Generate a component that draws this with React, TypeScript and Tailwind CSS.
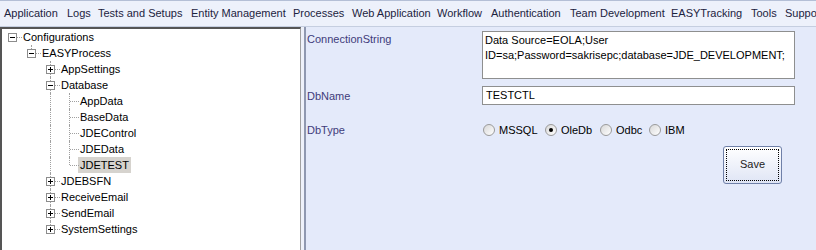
import React from "react";

type Node = { label: string; children?: Node[]; open?: boolean; selected?: boolean };

const tree: Node = {
  label: "Configurations",
  open: true,
  children: [
    {
      label: "EASYProcess",
      open: true,
      children: [
        { label: "AppSettings", children: [{ label: "x" }] },
        {
          label: "Database",
          open: true,
          children: [
            { label: "AppData" },
            { label: "BaseData" },
            { label: "JDEControl" },
            { label: "JDEData" },
            { label: "JDETEST", selected: true },
          ],
        },
        { label: "JDEBSFN", children: [{ label: "x" }] },
        { label: "ReceiveEmail", children: [{ label: "x" }] },
        { label: "SendEmail", children: [{ label: "x" }] },
        { label: "SystemSettings", children: [{ label: "x" }] },
      ],
    },
  ],
};

type Row = { node: Node; level: number; hasNext: boolean; guides: boolean[] };

function flatten(node: Node, level: number, hasNext: boolean, guides: boolean[], out: Row[]) {
  out.push({ node, level, hasNext, guides });
  if (node.open && node.children) {
    node.children.forEach((c, i) => {
      const next = i < node.children!.length - 1;
      flatten(c, level + 1, next, level === 0 ? [...guides] : [...guides, hasNext], out);
    });
  }
}

const rows: Row[] = [];
flatten(tree, 0, false, [], rows);

const menu: [string, number][] = [
  ["Application", 63],
  ["Logs", 31],
  ["Tests and Setups", 93],
  ["Entity Management", 102],
  ["Processes", 59],
  ["Web Application", 85],
  ["Workflow", 54],
  ["Authentication", 79],
  ["Team Development", 101],
  ["EASYTracking", 80],
  ["Tools", 34],
  ["Support", 60],
];

const ExpandBox = ({ open }: { open: boolean }) => (
  <div className="relative z-10 w-[9px] h-[9px] border border-[#8c8c8c] bg-white flex items-center justify-center">
    <div className="absolute w-[5px] h-px bg-black" />
    {!open && <div className="absolute w-px h-[5px] bg-black" />}
  </div>
);

const TreeRow = ({ row }: { row: Row }) => {
  const { node, level, hasNext, guides } = row;
  const hasKids = !!node.children;
  return (
    <div className="flex h-[16px] items-stretch">
      <div className="w-[1px]" />
      {level > 0 && <div className="w-[19px]" />}
      {guides.map((g, i) => (
        <div key={i} className="w-[19px] relative">
          {g && <div className="absolute left-[9px] top-0 bottom-0 border-l border-dotted border-[#a0a0a0]" />}
        </div>
      ))}
      <div className="w-[19px] relative flex items-center justify-center">
        {level > 0 && (
          <div
            className={`absolute left-[9px] top-0 border-l border-dotted border-[#a0a0a0] ${hasNext ? "bottom-0" : "h-[8px]"}`}
          />
        )}
        <div className="absolute left-[10px] right-0 top-[8px] border-t border-dotted border-[#a0a0a0]" />
        {hasKids && <ExpandBox open={!!node.open} />}
      </div>
      <div
        className={`flex items-center -ml-px px-[2px] text-[11px] text-black ${node.selected ? "bg-[#d6d3ce]" : ""}`}
      >
        {node.label}
      </div>
    </div>
  );
};

const Radio = ({ checked, label, w }: { checked?: boolean; label: string; w: string }) => (
  <div className={`flex items-center gap-[4px] ${w}`}>
    <div className="w-[12px] h-[12px] rounded-full border border-[#9a9a9a] bg-gradient-to-br from-[#d8d8d8] to-white flex items-center justify-center">
      {checked && <div className="w-[4px] h-[4px] rounded-full bg-black" />}
    </div>
    <span className="text-[11px] text-black">{label}</span>
  </div>
);

export default function App() {
  return (
    <div
      className="w-[816px] h-[250px] overflow-hidden flex flex-col bg-[#e4eafa]"
      style={{ fontFamily: '"Liberation Sans", Arial, sans-serif' }}
    >
      <div className="h-[27px] shrink-0 flex items-center pl-[4px] bg-[#edf1fb] border-t border-[#b4bfd6] border-b border-b-[#c5cee0] overflow-hidden whitespace-nowrap">
        {menu.map(([m, w]) => (
          <div key={m} className="text-[11px] text-[#1c2340] shrink-0" style={{ width: w }}>
            {m}
          </div>
        ))}
      </div>

      <div className="flex flex-1 min-h-0">
        <div className="w-[301px] shrink-0 bg-white border-l-2 border-t-2 border-[#555] border-r border-r-[#a0a0a0]">
          {rows.map((r, i) => (
            <TreeRow key={i} row={r} />
          ))}
        </div>
        <div className="w-[3px] bg-[#eef1fa]" />
        <div className="flex-1 border-l-2 border-[#8f98b0] pl-[1px] pt-[4px] flex flex-col">
          <div className="flex">
            <div className="w-[175px] text-[11px] text-[#3f3c7a]">ConnectionString</div>
            <div className="w-[313px] h-[48px] bg-white border border-[#8e8f8f] px-[2px] pt-[1px] text-[11px] leading-[15px] text-black">
              Data Source=EOLA;User
              <br />
              ID=sa;Password=sakrisepc;database=JDE_DEVELOPMENT;
            </div>
          </div>
          <div className="flex mt-[7px]">
            <div className="w-[175px] pt-[2px] text-[11px] text-[#3f3c7a]">DbName</div>
            <div className="w-[313px] h-[19px] bg-white border border-[#8e8f8f] px-[3px] flex items-center text-[11px] text-black">
              TESTCTL
            </div>
          </div>
          <div className="flex mt-[17px] items-center">
            <div className="w-[176px] text-[11px] text-[#3f3c7a]">DbType</div>
            <Radio label="MSSQL" w="w-[62px]" />
            <Radio label="OleDb" checked w="w-[55px]" />
            <Radio label="Odbc" w="w-[49px]" />
            <Radio label="IBM" w="w-[50px]" />
          </div>
          <div className="flex justify-end pr-[34px] mt-[7px]">
            <button className="w-[59px] h-[38px] rounded-[3px] border border-[#6f80a8] bg-gradient-to-b from-white to-[#dfe5f5] p-[2px]">
              <div className="w-full h-full border border-dotted border-black flex items-center justify-center text-[11px] text-[#222]">
                Save
              </div>
            </button>
          </div>
        </div>
      </div>
    </div>
  );
}
